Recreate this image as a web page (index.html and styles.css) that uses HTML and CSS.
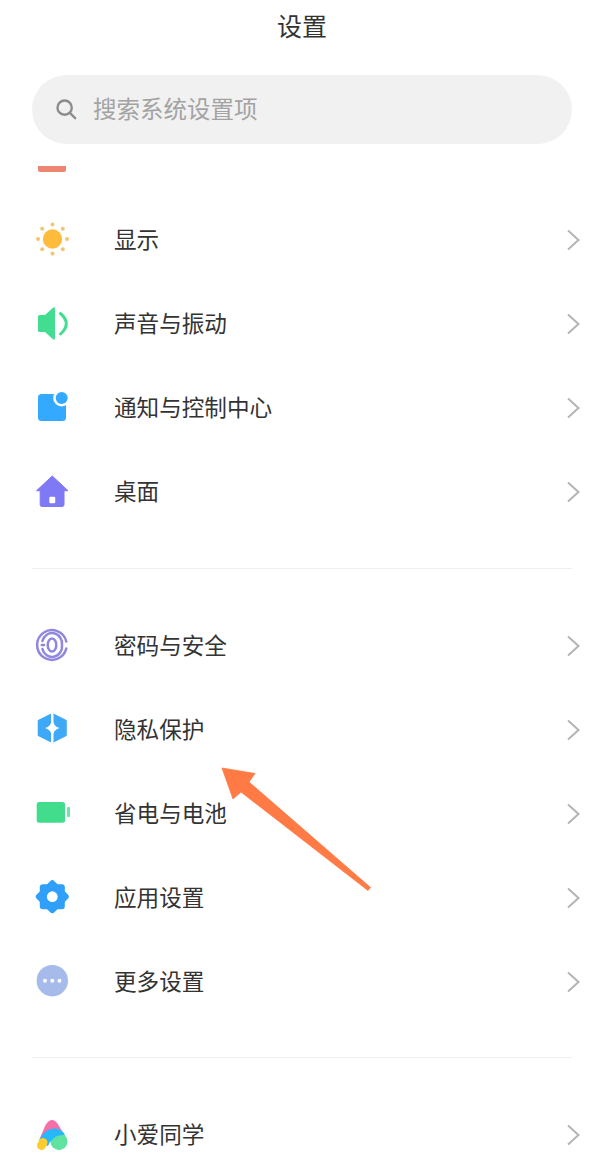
FILE: index.html
```html
<!DOCTYPE html>
<html lang="zh-CN">
<head>
<meta charset="utf-8">
<title>设置</title>
<link rel="stylesheet" href="styles.css">
</head>
<body>
<div class="page">
  <header class="title">设置</header>
  <div class="search">
    <svg class="search-icon" viewBox="0 0 24 24"><circle cx="10.5" cy="10.5" r="7.8"/><path d="M16.5 16.5L22 22"/></svg>
    <span class="search-text">搜索系统设置项</span>
  </div>
  <div class="cut-icon"></div>

  <section class="group">
    <div class="row">
      <svg class="icon" viewBox="0 0 40 40"><g fill="#f2c570"><circle cx="6" cy="19" r="2"/><circle cx="35" cy="19" r="2"/><circle cx="20.5" cy="4.5" r="2"/><circle cx="20.5" cy="33.5" r="2"/><circle cx="10.2" cy="8.7" r="2"/><circle cx="30.8" cy="8.7" r="2"/><circle cx="10.2" cy="29.3" r="2"/><circle cx="30.8" cy="29.3" r="2"/></g><circle cx="20.5" cy="19" r="9.7" fill="#ffbb3b"/></svg>
      <span class="label">显示</span>
      <svg class="chev" viewBox="0 0 16 24"><path d="M2 2.5L12.5 12L2 21.5"/></svg>
    </div>
    <div class="row">
      <svg class="icon" viewBox="0 0 40 40"><path fill="#43dd92" d="M6 12.5Q6 11 7.500 11H13L21 3.800Q23 2.400 23 5V34Q23 36.600 21 35.200L13 28H7.500Q6 28 6 26.500Z"/><path fill="none" stroke="#43dd92" stroke-width="3" stroke-linecap="round" d="M28.500 9.500Q40 19.500 28.500 30"/></svg>
      <span class="label">声音与振动</span>
      <svg class="chev" viewBox="0 0 16 24"><path d="M2 2.5L12.5 12L2 21.5"/></svg>
    </div>
    <div class="row">
      <svg class="icon" viewBox="0 0 40 40"><rect x="6" y="6" width="28" height="27" rx="3.500" fill="#33aaff"/><circle cx="29.700" cy="10" r="8.500" fill="#fff"/><circle cx="29.700" cy="10" r="6" fill="#33aaff"/></svg>
      <span class="label">通知与控制中心</span>
      <svg class="chev" viewBox="0 0 16 24"><path d="M2 2.5L12.5 12L2 21.5"/></svg>
    </div>
    <div class="row">
      <svg class="icon" viewBox="0 0 40 40"><path fill="#7f79f5" stroke="#7f79f5" stroke-linejoin="round" d="M20.300 4L36 18.700H32V32.700Q32 34.500 30 34.500H10Q8.200 34.500 8.200 32.700V18.700H4.500Z"/><rect x="17.300" y="24.700" width="6" height="6.500" rx="1.200" fill="#fff"/></svg>
      <span class="label">桌面</span>
      <svg class="chev" viewBox="0 0 16 24"><path d="M2 2.5L12.5 12L2 21.5"/></svg>
    </div>
  </section>

  <hr class="divider">

  <section class="group">
    <div class="row">
      <svg class="icon" viewBox="0 0 40 40"><g fill="none" stroke="#8f88de" stroke-width="2.500" stroke-linecap="round"><path d="M34.300 15.500A14.800 14.800 0 1 0 34.300 22.500"/><path d="M9.800 19H12M10.400 15A10 10.500 0 0 1 30 19A10 10.500 0 0 1 10.400 23"/><ellipse cx="20" cy="19" rx="4.300" ry="6.600"/></g></svg>
      <span class="label">密码与安全</span>
      <svg class="chev" viewBox="0 0 16 24"><path d="M2 2.5L12.5 12L2 21.5"/></svg>
    </div>
    <div class="row">
      <svg class="icon" viewBox="0 0 40 40"><path fill="#3fa9f8" stroke="#3fa9f8" stroke-width="3" stroke-linejoin="round" d="M20.300 4.500L33.300 11V25L20.300 31.500L7.200 25V11Z"/><path stroke="#fff" stroke-width="2.400" d="M20.300 1V35"/><path fill="#fff" d="M20.300 9Q21.400 16.500 27.500 18Q21.400 19.500 20.300 27Q19.200 19.500 13.100 18Q19.200 16.500 20.300 9Z"/></svg>
      <span class="label">隐私保护</span>
      <svg class="chev" viewBox="0 0 16 24"><path d="M2 2.5L12.5 12L2 21.5"/></svg>
    </div>
    <div class="row">
      <svg class="icon" viewBox="0 0 40 40"><rect x="4.700" y="8" width="28.300" height="20.700" rx="2.500" fill="#41dd8d"/><rect x="35" y="13" width="3" height="10" rx="1" fill="#6fe3a8"/></svg>
      <span class="label">省电与电池</span>
      <svg class="chev" viewBox="0 0 16 24"><path d="M2 2.5L12.5 12L2 21.5"/></svg>
    </div>
    <div class="row">
      <svg class="icon" viewBox="0 0 40 40"><g fill="#2f9ffa"><rect x="7.800" y="6.200" width="25" height="25" rx="3"/><rect x="7.800" y="6.200" width="25" height="25" rx="3" transform="rotate(45 20.300 18.700)"/></g><circle cx="20.300" cy="18.700" r="5.400" fill="#fff"/></svg>
      <span class="label">应用设置</span>
      <svg class="chev" viewBox="0 0 16 24"><path d="M2 2.5L12.5 12L2 21.5"/></svg>
    </div>
    <div class="row">
      <svg class="icon" viewBox="0 0 40 40"><circle cx="20.300" cy="18.700" r="15.700" fill="#a6bbe9"/><g fill="#fff"><circle cx="13" cy="18.700" r="2"/><circle cx="20.300" cy="18.700" r="2"/><circle cx="27.500" cy="18.700" r="2"/></g></svg>
      <span class="label">更多设置</span>
      <svg class="chev" viewBox="0 0 16 24"><path d="M2 2.5L12.5 12L2 21.5"/></svg>
    </div>
  </section>

  <hr class="divider divider-low">

  <section class="group">
    <div class="row">
      <svg class="icon" viewBox="0 0 40 40"><path fill="#f76fa8" d="M13.500 10Q20 0 26.500 10L34 23H8Z"/><circle cx="27" cy="26.500" r="8.500" fill="#5fe3a1"/><path fill="#27b8fb" d="M7 25Q13 13 23 13.500Q30 14 33 20Q26 19.500 22 23Q18 26 16 31L9 29Z"/><path stroke="#ffcc2e" stroke-width="9" stroke-linecap="round" d="M9.500 30.500L11 27.500"/></svg>
      <span class="label">小爱同学</span>
      <svg class="chev" viewBox="0 0 16 24"><path d="M2 2.5L12.5 12L2 21.5"/></svg>
    </div>
  </section>

  <svg class="arrow" viewBox="0 0 612 1155"><path fill="#ff7a45" stroke="#ff7a45" stroke-width="0.800" stroke-linejoin="round" d="M222 768L255 773.500L249 782L370.500 887.500L368 890.500L241 792L233 799Z"/></svg>
</div>
</body>
</html>
```
FILE: styles.css
```css
html, body {
  margin: 0;
  padding: 0;
  background: #fff;
}

.page {
  position: relative;
  width: 612px;
  height: 1155px;
  overflow: hidden;
  font-family: "Noto Sans CJK SC", "Noto Sans", sans-serif;
  color: #333;
}

.title {
  height: 54px;
  line-height: 50px;
  text-align: center;
  font-size: 25px;
  padding-right: 8px;
}

.search {
  display: flex;
  align-items: center;
  height: 69px;
  margin: 21px 40px 0 32px;
  padding-left: 23px;
  border-radius: 34.5px;
  background: #f1f1f1;
}

.search-icon {
  width: 22px;
  height: 22px;
  flex: none;
  margin-bottom: 1px;
  fill: none;
  stroke: #8c8c8c;
  stroke-width: 2.6;
  stroke-linecap: round;
}

.search-text {
  margin-left: 16px;
  padding-bottom: 3px;
  font-size: 23.5px;
  color: #a3a3a3;
}

.cut-icon {
  width: 28px;
  height: 6px;
  margin: 22px 0 0 38px;
  border-radius: 0 0 2px 2px;
  background: #ee8573;
}

.group {
  margin-top: 26px;
}

.row {
  display: flex;
  align-items: center;
  height: 84px;
  padding-left: 32px;
  padding-right: 30px;
}

.icon {
  width: 40px;
  height: 40px;
  flex: none;
}

.label {
  margin-left: 42px;
  padding-bottom: 4px;
  font-size: 22.6px;
  color: #333;
}

.chev {
  width: 16px;
  height: 24px;
  flex: none;
  margin-left: auto;
  fill: none;
  stroke: #b4b4b4;
  stroke-width: 2;
}

.divider {
  height: 1px;
  margin: 34px 40px 0 32px;
  border: 0;
  background: #efefef;
}

.divider + .group {
  margin-top: 35px;
}

.divider-low {
  margin-top: 33px;
}

.arrow {
  position: absolute;
  left: 0;
  top: 0;
  width: 612px;
  height: 1155px;
  pointer-events: none;
}
```
